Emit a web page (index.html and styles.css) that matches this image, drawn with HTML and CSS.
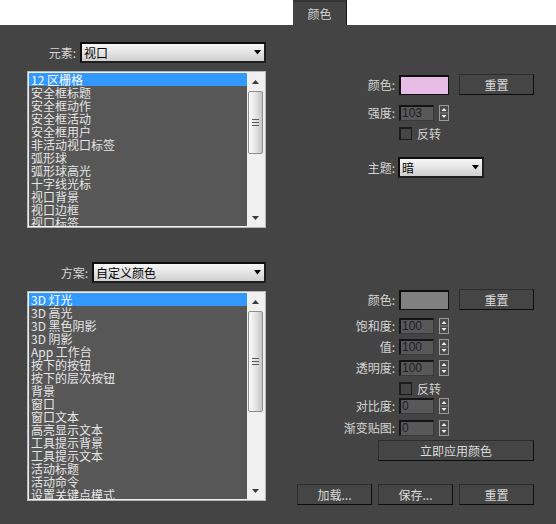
FILE: index.html
```html
<!DOCTYPE html>
<html lang="zh-CN">
<head>
<meta charset="utf-8">
<title>颜色</title>
<link rel="stylesheet" href="styles.css">
</head>
<body>
<div class="top"><div class="tab">颜色</div></div>
<div class="panel">
  <section class="sec sec1">
    <div class="left">
      <div class="selrow">
        <span class="lbl">元素:</span>
        <div class="select"><span>视口</span><svg class="caret" width="7" height="5" viewBox="0 0 7 5"><path d="M0 0H7L3.5 4.5Z" fill="#000"/></svg></div>
      </div>
      <div class="list">
        <ul class="items">
          <li class="sel">12 区栅格</li>
          <li>安全框标题</li>
          <li>安全框动作</li>
          <li>安全框活动</li>
          <li>安全框用户</li>
          <li>非活动视口标签</li>
          <li>弧形球</li>
          <li>弧形球高光</li>
          <li>十字线光标</li>
          <li>视口背景</li>
          <li>视口边框</li>
          <li>视口标签</li>
        </ul>
        <div class="scroll">
          <div class="arrowbtn"><svg width="7" height="4" viewBox="0 0 7 4"><path d="M3.5 0L7 4H0Z" fill="#3a3a3a"/></svg></div>
          <div class="thumb"><svg width="7" height="7" viewBox="0 0 7 7"><path d="M0 0.5H7M0 3.5H7M0 6.5H7" stroke="#5a5a5a"/></svg></div>
          <div class="track"></div>
          <div class="arrowbtn"><svg width="7" height="4" viewBox="0 0 7 4"><path d="M0 0H7L3.5 4Z" fill="#3a3a3a"/></svg></div>
        </div>
      </div>
    </div>
    <div class="right">
      <div class="row h21">
        <span class="lbl">颜色:</span>
        <div class="swatch pink"></div>
        <div class="btn gap">重置</div>
      </div>
      <div class="row h16 mt10">
        <span class="lbl">强度:</span>
        <div class="num">103</div>
        <svg class="spin" width="10" height="16" viewBox="0 0 10 16"><rect x="0.5" y="0.5" width="9" height="15" fill="#4a4a4a" stroke="#9a9a9a"/><path d="M1 8H9" stroke="#7a7a7a"/><path d="M5 3L7.5 6H2.5Z" fill="#eee"/><path d="M2.5 10H7.5L5 13Z" fill="#eee"/></svg>
      </div>
      <div class="row h13 mt6">
        <span class="lbl"></span>
        <div class="check"></div>
        <span class="chklbl">反转</span>
      </div>
      <div class="row h21 mt17">
        <span class="lbl">主题:</span>
        <div class="select theme"><span>暗</span><svg class="caret" width="7" height="5" viewBox="0 0 7 5"><path d="M0 0H7L3.5 4.5Z" fill="#000"/></svg></div>
      </div>
    </div>
  </section>

  <section class="sec sec2">
    <div class="left">
      <div class="selrow">
        <span class="lbl">方案:</span>
        <div class="select"><span>自定义颜色</span><svg class="caret" width="7" height="5" viewBox="0 0 7 5"><path d="M0 0H7L3.5 4.5Z" fill="#000"/></svg></div>
      </div>
      <div class="list">
        <ul class="items">
          <li class="sel">3D 灯光</li>
          <li>3D 高光</li>
          <li>3D 黑色阴影</li>
          <li>3D 阴影</li>
          <li>App 工作台</li>
          <li>按下的按钮</li>
          <li>按下的层次按钮</li>
          <li>背景</li>
          <li>窗口</li>
          <li>窗口文本</li>
          <li>高亮显示文本</li>
          <li>工具提示背景</li>
          <li>工具提示文本</li>
          <li>活动标题</li>
          <li>活动命令</li>
          <li>设置关键点模式</li>
        </ul>
        <div class="scroll">
          <div class="arrowbtn"><svg width="7" height="4" viewBox="0 0 7 4"><path d="M3.5 0L7 4H0Z" fill="#3a3a3a"/></svg></div>
          <div class="thumb"><svg width="7" height="7" viewBox="0 0 7 7"><path d="M0 0.5H7M0 3.5H7M0 6.5H7" stroke="#5a5a5a"/></svg></div>
          <div class="track"></div>
          <div class="arrowbtn"><svg width="7" height="4" viewBox="0 0 7 4"><path d="M0 0H7L3.5 4Z" fill="#3a3a3a"/></svg></div>
        </div>
      </div>
    </div>
    <div class="right">
      <div class="row h21">
        <span class="lbl">颜色:</span>
        <div class="swatch gray"></div>
        <div class="btn gap">重置</div>
      </div>
      <div class="row h16 mt8">
        <span class="lbl">饱和度:</span>
        <div class="num">100</div>
        <svg class="spin" width="10" height="16" viewBox="0 0 10 16"><rect x="0.5" y="0.5" width="9" height="15" fill="#4a4a4a" stroke="#9a9a9a"/><path d="M1 8H9" stroke="#7a7a7a"/><path d="M5 3L7.5 6H2.5Z" fill="#eee"/><path d="M2.5 10H7.5L5 13Z" fill="#eee"/></svg>
      </div>
      <div class="row h16 mt5">
        <span class="lbl">值:</span>
        <div class="num">100</div>
        <svg class="spin" width="10" height="16" viewBox="0 0 10 16"><rect x="0.5" y="0.5" width="9" height="15" fill="#4a4a4a" stroke="#9a9a9a"/><path d="M1 8H9" stroke="#7a7a7a"/><path d="M5 3L7.5 6H2.5Z" fill="#eee"/><path d="M2.5 10H7.5L5 13Z" fill="#eee"/></svg>
      </div>
      <div class="row h16 mt5">
        <span class="lbl">透明度:</span>
        <div class="num">100</div>
        <svg class="spin" width="10" height="16" viewBox="0 0 10 16"><rect x="0.5" y="0.5" width="9" height="15" fill="#4a4a4a" stroke="#9a9a9a"/><path d="M1 8H9" stroke="#7a7a7a"/><path d="M5 3L7.5 6H2.5Z" fill="#eee"/><path d="M2.5 10H7.5L5 13Z" fill="#eee"/></svg>
      </div>
      <div class="row h13 mt6">
        <span class="lbl"></span>
        <div class="check"></div>
        <span class="chklbl">反转</span>
      </div>
      <div class="row h16 mt3">
        <span class="lbl">对比度:</span>
        <div class="num">0</div>
        <svg class="spin" width="10" height="16" viewBox="0 0 10 16"><rect x="0.5" y="0.5" width="9" height="15" fill="#4a4a4a" stroke="#9a9a9a"/><path d="M1 8H9" stroke="#7a7a7a"/><path d="M5 3L7.5 6H2.5Z" fill="#eee"/><path d="M2.5 10H7.5L5 13Z" fill="#eee"/></svg>
      </div>
      <div class="row h16 mt6">
        <span class="lbl">渐变贴图:</span>
        <div class="num">0</div>
        <svg class="spin" width="10" height="16" viewBox="0 0 10 16"><rect x="0.5" y="0.5" width="9" height="15" fill="#4a4a4a" stroke="#9a9a9a"/><path d="M1 8H9" stroke="#7a7a7a"/><path d="M5 3L7.5 6H2.5Z" fill="#eee"/><path d="M2.5 10H7.5L5 13Z" fill="#eee"/></svg>
      </div>
      <div class="btn apply">立即应用颜色</div>
      <div class="btnrow">
        <div class="btn">加载...</div>
        <div class="btn">保存...</div>
        <div class="btn">重置</div>
      </div>
    </div>
  </section>
</div>
</body>
</html>
```

FILE: styles.css
```css
* { box-sizing: border-box; }

body {
  margin: 0;
  width: 556px;
  height: 524px;
  overflow: hidden;
  background: #ffffff;
  font-family: "Noto Sans CJK SC", "Noto Sans", sans-serif;
  font-size: 12px;
  color: #d4d4d4;
}

.top {
  height: 25px;
  padding-left: 293px;
  background: #ffffff;
}

.tab {
  width: 54px;
  height: 25px;
  background: #444444;
  border-top: 2px solid #353535;
  border-right: 1px solid #161616;
  color: #d2d2d2;
  text-align: center;
  line-height: 24px;
}

.panel {
  height: 499px;
  background: #444444;
  padding-left: 27px;
}

.sec {
  display: flex;
  column-gap: 31px;
}

.sec1 { height: 203px; }

.left { width: 239px; }
.sec1 .left { padding-top: 17px; }
.sec2 .left { padding-top: 34px; }

.selrow {
  display: flex;
  align-items: center;
  height: 21px;
}

.selrow .lbl {
  text-align: right;
  padding-right: 4px;
  line-height: 16px;
}
.sec1 .selrow .lbl { width: 53px; }
.sec2 .selrow .lbl { width: 65px; }

.select {
  flex: 1;
  height: 21px;
  border: 2px solid #0e0e0e;
  border-right-color: #1e1e1e;
  border-bottom-color: #1e1e1e;
  background: linear-gradient(#f7f7f7, #e6e6e6 45%, #cfcfcf);
  color: #000000;
  display: flex;
  align-items: center;
  justify-content: space-between;
  padding: 0 3px 0 2px;
  line-height: 16px;
}

.select.theme {
  flex: none;
  width: 86px;
  margin-left: -1px;
}

.list {
  margin-top: 8px;
  display: flex;
  border: 1px solid #b6b6b6;
  padding: 1px 2px 1px 1px;
  background: #f0f0f0;
}
.sec1 .list { height: 157px; }
.sec2 .list { height: 210px; }

.items {
  flex: 1;
  margin: 0;
  padding: 0;
  list-style: none;
  background: #575757;
  overflow: hidden;
}

.items li {
  height: 13px;
  line-height: 13px;
  padding-left: 2px;
  color: #e6e6e6;
  white-space: nowrap;
}

.items li.sel {
  background: #3399ff;
  color: #ffffff;
}

.scroll {
  width: 16px;
  display: flex;
  flex-direction: column;
  background: #f0f0f0;
}

.arrowbtn {
  height: 17px;
  display: flex;
  align-items: center;
  justify-content: center;
}

.thumb {
  margin: 1px 0 0 1px;
  border: 1px solid #8e8e8e;
  border-radius: 2px;
  background: linear-gradient(to right, #fbfbfb, #e2e2e2 55%, #c4c4c4);
  display: flex;
  align-items: center;
  justify-content: center;
}
.sec1 .thumb { height: 63px; }
.sec2 .thumb { height: 101px; }

.track { flex: 1; }

.right { width: 237px; }
.sec1 .right { padding-top: 49px; }
.sec2 .right { padding-top: 61px; }

.row {
  display: flex;
  align-items: center;
}
.h21 { height: 21px; }
.h16 { height: 16px; }
.h13 { height: 13px; }
.mt3 { margin-top: 3px; }
.mt5 { margin-top: 5px; }
.mt6 { margin-top: 6px; }
.mt8 { margin-top: 8px; }
.mt10 { margin-top: 10px; }
.mt17 { margin-top: 17px; }

.row .lbl {
  flex: none;
  width: 102px;
  padding-right: 4px;
  text-align: right;
  line-height: 16px;
  white-space: nowrap;
}

.swatch {
  width: 50px;
  height: 20px;
  border: 1px solid #0e0e0e;
  border-top-width: 2px;
  border-left-width: 2px;
}
.swatch.pink { background: #e7bde7; }
.swatch.gray { background: #808080; }

.btn {
  flex: none;
  width: 75px;
  height: 21px;
  background: #454545;
  border: 1px solid;
  border-color: #2c2c2c #0c0c0c #0c0c0c #2c2c2c;
  color: #dadada;
  text-align: center;
  line-height: 19px;
}

.btn.gap { margin-left: 10px; }

.btn.apply {
  width: 156px;
  margin: 4px 0 0 81px;
}

.btnrow {
  display: flex;
  gap: 6px;
  margin-top: 23px;
}

.num {
  width: 35px;
  height: 16px;
  background: #585858;
  border-top: 2px solid #141414;
  border-left: 2px solid #141414;
  border-right: 1px solid #3a3a3a;
  border-bottom: 1px solid #3a3a3a;
  color: #1c1c2a;
  font-family: "Liberation Sans", "DejaVu Sans", sans-serif;
  font-size: 12px;
  line-height: 13px;
  padding-left: 1px;
}

.spin {
  flex: none;
  margin-left: 5px;
}

.check {
  width: 13px;
  height: 13px;
  border: 2px solid #1c1c1c;
  border-right-width: 1px;
  border-bottom-width: 1px;
  background: #454545;
}

.chklbl {
  margin-left: 5px;
  line-height: 16px;
  color: #d0d0d0;
}
```
